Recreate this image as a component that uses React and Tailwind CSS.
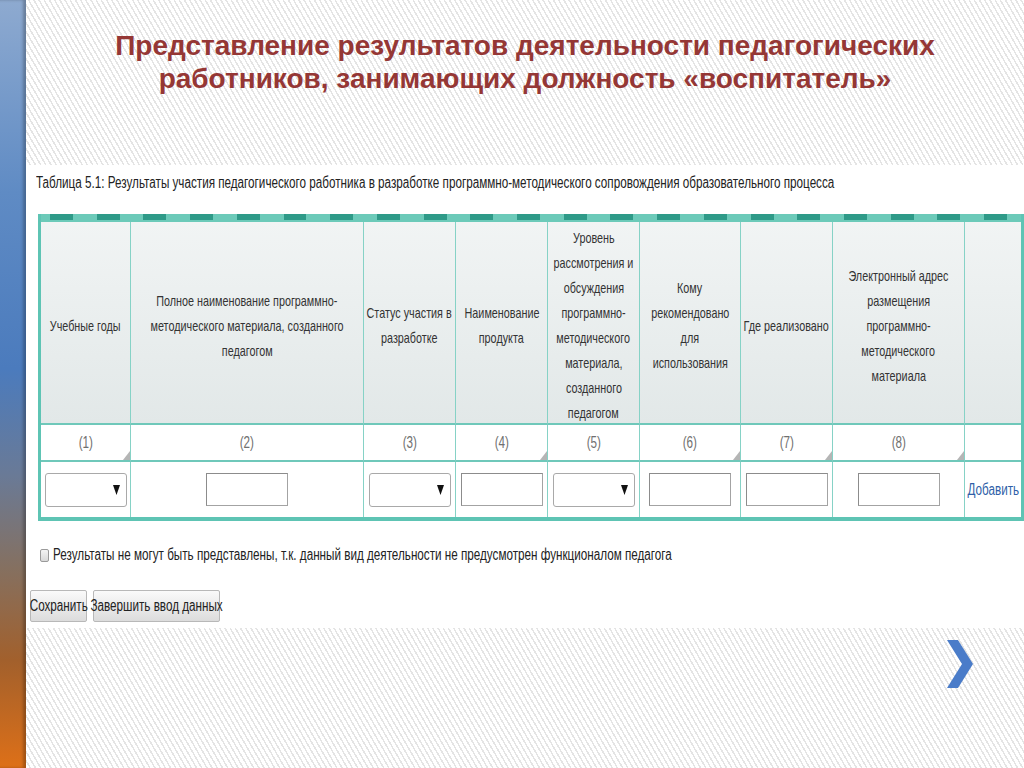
import React from 'react';

const font = "font-['Liberation_Sans',Arial,sans-serif]";

const headers = [
  ['Учебные годы'],
  ['Полное наименование программно-', 'методического материала, созданного', 'педагогом'],
  ['Статус участия в', 'разработке'],
  ['Наименование', 'продукта'],
  ['Уровень', 'рассмотрения и', 'обсуждения', 'программно-', 'методического', 'материала,', 'созданного', 'педагогом'],
  ['Кому', 'рекомендовано', 'для', 'использования'],
  ['Где реализовано'],
  ['Электронный адрес', 'размещения', 'программно-', 'методического', 'материала'],
  [],
];

const fields = ['select', 'text', 'select', 'text', 'select', 'text', 'text', 'text', 'link'];
const corners = [true, false, false, true, false, true, true, true, false];

// текст на снимке сжат по горизонтали
function N({ children, left, head }) {
  return (
    <span
      className={`inline-block whitespace-nowrap ${head ? 'scale-x-[0.72]' : 'scale-x-[0.73]'} ${left ? 'origin-left' : 'origin-center'}`}
    >
      {children}
    </span>
  );
}

function Select() {
  return (
    <div className="w-[82px] h-[34px] rounded-[3px] border border-[#a9a9a9] bg-white flex items-center justify-end pr-[6px]">
      <svg width="7" height="10" viewBox="0 0 7 10">
        <polygon points="0,0 7,0 3.5,10" fill="#111" />
      </svg>
    </div>
  );
}

function TextBox() {
  return (
    <div className="w-[82px] h-[33px] border border-[#a3a3a3] border-t-[#8c8c8c] border-l-[#8c8c8c] bg-white" />
  );
}

export default function App() {
  return (
    <div className={`w-[1024px] h-[768px] flex overflow-hidden bg-white ${font}`}>
      {/* боковая полоса слайда */}
      <div className="w-[26px] shrink-0 bg-[image:linear-gradient(180deg,#8eaad0_0%,#5f8bc4_25%,#4b7bbd_48%,#6a7a96_62%,#857060_74%,#a2602c_86%,#de7018_100%)] shadow-[inset_-3px_0_3px_rgba(0,0,0,0.25)]" />

      <div className="flex-1 min-w-0 flex flex-col bg-[image:repeating-linear-gradient(60deg,#ffffff_0px,#ffffff_3px,#e4e4e4_3px,#e4e4e4_4.5px)]">
        {/* заголовок */}
        <div className="h-[165px] pt-[29px] text-center text-[28px] leading-[33px] font-bold text-[#953735]">
          Представление результатов деятельности педагогических
          <br />
          работников, занимающих должность «воспитатель»
        </div>

        {/* снимок формы */}
        <div className="h-[463px] bg-white pt-[8px] pl-[4px] text-[#222] overflow-hidden">
          <div className="pl-[6px] text-[16px] leading-[20px]">
            <N left>
              Таблица 5.1: Результаты участия педагогического работника в разработке программно-методического сопровождения образовательного процесса
            </N>
          </div>

          <div className="ml-[8px] mt-[21px] w-[986px] border-x-[3px] border-b-[4px] border-[#5ec4b4]">
            <div className="h-[8px] bg-[#6ccab9] bg-[image:repeating-linear-gradient(90deg,transparent_0px,transparent_9px,#2e9a88_9px,#2e9a88_32px,transparent_32px,transparent_46.7px)] bg-[length:auto_6px] bg-no-repeat bg-top" />
            <div className="grid grid-cols-[90px_233px_92px_92px_92px_101px_92px_132px_56px]">
              {headers.map((lines, i) => (
                <div
                  key={'h' + i}
                  className={`h-[203px] border-b-2 border-b-[#6fc8ba] bg-[image:linear-gradient(180deg,#f1f4f4,#e2e8e8)] flex flex-col items-center justify-center pt-[5px] text-center text-[15px] leading-[25px] text-[#333] ${i < 8 ? 'border-r border-r-[#86d2c6]' : ''}`}
                >
                  {lines.map((l) => (
                    <N key={l} head>{l}</N>
                  ))}
                </div>
              ))}

              {headers.map((_, i) => (
                <div
                  key={'n' + i}
                  className={`relative h-[37px] border-b-2 border-b-[#6fc8ba] flex items-center justify-center text-[16px] text-[#707070] ${i < 8 ? 'border-r border-r-[#86d2c6]' : ''}`}
                >
                  {i < 8 && <N>{`(${i + 1})`}</N>}
                  {corners[i] && (
                    <svg className="absolute right-0 bottom-0" width="7" height="9" viewBox="0 0 7 9">
                      <polygon points="7,0 7,9 0,9" fill="#b5b5b5" />
                    </svg>
                  )}
                </div>
              ))}

              {fields.map((f, i) => (
                <div
                  key={'f' + i}
                  className={`h-[55px] flex items-center justify-center ${i < 8 ? 'border-r border-r-[#86d2c6]' : ''}`}
                >
                  {f === 'select' && <Select />}
                  {f === 'text' && <TextBox />}
                  {f === 'link' && (
                    <a href="#" className="text-[16px] text-[#2f5fa8] underline">
                      <N>Добавить</N>
                    </a>
                  )}
                </div>
              ))}
            </div>
          </div>

          <div className="ml-[10px] mt-[24px] h-[20px] flex items-center gap-[4px] text-[16px]">
            <span className="shrink-0 w-[9px] h-[13px] border border-[#9a9a9a] rounded-[2px] bg-[image:linear-gradient(180deg,#f4f4f4,#d8d8d8)]" />
            <N left>
              Результаты не могут быть представлены, т.к. данный вид деятельности не предусмотрен функционалом педагога
            </N>
          </div>

          <div className="mt-[25px] flex gap-[6px]">
            <button className="w-[57px] h-[32px] flex items-center justify-center border border-[#b8b8b8] rounded-[2px] bg-[image:linear-gradient(180deg,#fafafa,#dcdcdc)] text-[16px] text-[#222]">
              <N>Сохранить</N>
            </button>
            <button className="w-[127px] h-[32px] flex items-center justify-center border border-[#b8b8b8] rounded-[2px] bg-[image:linear-gradient(180deg,#fafafa,#dcdcdc)] text-[16px] text-[#222]">
              <N>Завершить ввод данных</N>
            </button>
          </div>
        </div>

        {/* стрелка перехода */}
        <div className="mt-[12px] flex justify-end pr-[51px]">
          <svg width="26" height="48" viewBox="0 0 26 48">
            <polygon points="0,0 11,0 26,24 11,48 0,48 15,24" fill="#4a7cc9" />
          </svg>
        </div>
      </div>
    </div>
  );
}
